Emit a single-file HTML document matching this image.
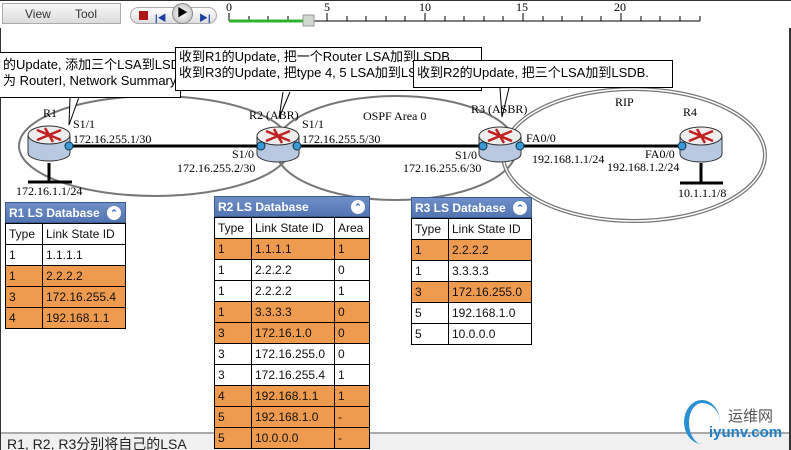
<!DOCTYPE html>
<html><head><meta charset="utf-8"><style>
*{margin:0;padding:0;box-sizing:border-box}
body{width:791px;height:450px;overflow:hidden;background:#fff;position:relative;font-family:"Liberation Sans","Noto Sans CJK SC",sans-serif}
.abs{position:absolute}
.call{position:absolute;background:#fff;border:1px solid #000;font-size:13px;line-height:16px;white-space:nowrap;overflow:hidden;padding:2px 3px;color:#000}
table{border-collapse:collapse;font-size:12px;position:absolute;background:#fff}
td{border:1px solid #000;height:21px;padding:0 3px;color:#111}
tr.o td{background:#ef9b4f}
.hd{position:absolute;background:linear-gradient(#6f8fc8,#5375b3);color:#fff;font-weight:bold;font-size:12px;line-height:20px;padding-left:3px;border:1px solid #3b5a90}
.hd i{position:absolute;right:4px;top:3px;width:14px;height:14px;border-radius:50%;background:#fff;color:#36c;font-style:normal;font-size:9px;line-height:14px;text-align:center}
.ser{font-family:"Liberation Serif",serif;font-size:12px;position:absolute;white-space:nowrap}
</style></head><body>
<div class="abs" style="left:0;top:28px;width:791px;height:422px;border-left:1px solid #333;border-right:2px solid #333"></div>
<div class="abs" style="left:0;top:0;width:791px;height:1px;background:#333"></div>
<div class="abs" style="left:2px;top:3px;width:119px;height:21px;border:1px solid #aaa;background:linear-gradient(#f8f8f8,#dcdcdc);font-size:12px;color:#333"><span class="abs" style="left:22px;top:3px">View</span><span class="abs" style="left:72px;top:3px">Tool</span></div>
<div class="abs" style="left:130px;top:7px;width:87px;height:17px;border:1px solid #aaa;border-radius:9px;background:linear-gradient(#fff,#ddd)"></div>
<div class="abs" style="left:139px;top:11px;width:9px;height:9px;background:#b01818"></div>
<div class="abs" style="left:155px;top:11px;color:#1a3fa0;font-size:9px;font-weight:bold">|◀</div>
<div class="abs" style="left:172px;top:3px;width:21px;height:21px;border-radius:50%;border:1px solid #888;background:radial-gradient(#fff,#bbb);font-size:11px;text-align:center;line-height:19px">▶</div>
<div class="abs" style="left:199px;top:11px;color:#1a3fa0;font-size:9px;font-weight:bold">▶|</div>
<svg class="abs" style="left:0;top:0" width="791" height="450">
<g font-family="Liberation Serif" font-size="12" fill="#000">
<text x="226" y="11">0</text><text x="324" y="11">5</text><text x="419" y="11">10</text><text x="516" y="11">15</text><text x="614" y="11">20</text>
</g>
<line x1="229" y1="21" x2="700" y2="21" stroke="#000"/>
<g stroke="#000">
<path d="M229 21V13M249 21V16M268 21V16M288 21V16M307 21V16M327 21V13M347 21V16M366 21V16M386 21V16M405 21V16M425 21V13M445 21V16M464 21V16M484 21V16M503 21V16M523 21V13M543 21V16M562 21V16M582 21V16M601 21V16M621 21V13M641 21V16M660 21V16M680 21V16M700 21V16"/>
</g>
<line x1="229" y1="21" x2="307" y2="21" stroke="#2db52d" stroke-width="3"/>
<rect x="303" y="15" width="11" height="11" fill="#d0d8d0" stroke="#999"/>
<ellipse cx="155" cy="146" rx="136" ry="50" fill="none" stroke="#777" stroke-width="2"/>
<ellipse cx="396" cy="148" rx="121" ry="52" fill="none" stroke="#777" stroke-width="2"/>
<ellipse cx="634" cy="155" rx="131" ry="66" fill="none" stroke="#777" stroke-width="4"/>
<ellipse cx="634" cy="155" rx="131" ry="66" fill="none" stroke="#fff" stroke-width="1.5"/>
<g stroke="#000" stroke-width="3"><line x1="68" y1="146" x2="262" y2="146"/><line x1="296" y1="146" x2="485" y2="146"/><line x1="518" y1="146" x2="683" y2="146"/>
<line x1="49" y1="163" x2="49" y2="182"/><line x1="28" y1="182" x2="72" y2="182"/>
<line x1="701" y1="163" x2="701" y2="182"/><line x1="680" y1="183" x2="723" y2="183"/></g>
<defs><g id="rt"><path d="M-21 0v18a21 8 0 0 0 42 0v-18" fill="#b8c8e0" stroke="#333"/><ellipse cx="0" cy="0" rx="21" ry="9" fill="#eee" stroke="#333"/><path d="M-12 -5L12 5M12 -5L-12 5M-4 -7L4 7" stroke="#c02020" stroke-width="2.5"/></g></defs>
<use href="#rt" x="49" y="135"/><use href="#rt" x="278" y="136"/><use href="#rt" x="500" y="136"/><use href="#rt" x="701" y="136"/>
<g fill="#3a9ad8" stroke="#134"><circle cx="69" cy="146" r="4"/><circle cx="261" cy="146" r="4"/><circle cx="297" cy="146" r="4"/><circle cx="483" cy="146" r="4"/><circle cx="520" cy="146" r="4"/><circle cx="682" cy="146" r="4"/></g>
<g stroke="#000" fill="#fff"><path d="M70 97L69 125L79 97"/><path d="M290 92L279 118L283 92"/><path d="M500 88L502 117L509 88"/></g>
</svg>
<div class="call" style="left:-1px;top:52px;width:182px;height:46px;padding-top:4px">的Update, 添加三个LSA到LSDB<br>为 RouterI, Network Summary</div>
<div class="call" style="left:175px;top:47px;width:307px;height:44px;padding-top:1px">收到R1的Update, 把一个Router LSA加到LSDB.<br>收到R3的Update, 把type 4, 5 LSA加到LSDB</div>
<div class="call" style="left:413px;top:60px;width:260px;height:28px;padding-top:4px">收到R2的Update, 把三个LSA加到LSDB.</div>
<div class="ser" style="left:43px;top:106px">R1</div>
<div class="ser" style="left:73px;top:117px">S1/1<br>172.16.255.1/30</div>
<div class="ser" style="left:232px;top:147px">S1/0</div>
<div class="ser" style="left:177px;top:161px">172.16.255.2/30</div>
<div class="ser" style="left:16px;top:184px">172.16.1.1/24</div>
<div class="ser" style="left:249px;top:108px">R2 (ABR)</div>
<div class="ser" style="left:302px;top:117px">S1/1<br>172.16.255.5/30</div>
<div class="ser" style="left:363px;top:109px">OSPF Area 0</div>
<div class="ser" style="left:471px;top:102px">R3 (ASBR)</div>
<div class="ser" style="left:455px;top:148px">S1/0</div>
<div class="ser" style="left:403px;top:161px">172.16.255.6/30</div>
<div class="ser" style="left:526px;top:131px">FA0/0</div>
<div class="ser" style="left:532px;top:152px">192.168.1.1/24</div>
<div class="ser" style="left:645px;top:147px">FA0/0</div>
<div class="ser" style="left:607px;top:160px">192.168.1.2/24</div>
<div class="ser" style="left:615px;top:95px">RIP</div>
<div class="ser" style="left:683px;top:105px">R4</div>
<div class="ser" style="left:678px;top:186px">10.1.1.1/8</div>
<div class="abs" style="left:1px;top:432px;width:788px;height:18px;border-top:2px solid #aaa;background:#f0f0f0;font-size:14px;color:#222;padding-left:6px;line-height:20px;white-space:nowrap;overflow:hidden">R1, R2, R3分别将自己的LSA</div>
<div class="abs" style="left:684px;top:400px;width:36px;height:44px;border-radius:50%;border-left:5px solid #2a8fd0;border-top:3px solid #2a8fd0"></div>
<div class="abs" style="left:728px;top:405px;font-size:15px;color:#555">运维网</div>
<div class="abs" style="left:709px;top:424px;font-size:15px;font-weight:bold;color:#1e7fc8">iyunv.com</div>
<div class="hd" style="left:5px;top:202px;width:121px;height:21px">R1 LS Database<i>⌃</i></div>
<table style="left:5px;top:223px;width:121px"><tr><td style="width:37px">Type</td><td>Link State ID</td></tr>
<tr><td>1</td><td>1.1.1.1</td></tr><tr class="o"><td>1</td><td>2.2.2.2</td></tr><tr class="o"><td>3</td><td>172.16.255.4</td></tr><tr class="o"><td>4</td><td>192.168.1.1</td></tr></table>
<div class="hd" style="left:214px;top:196px;width:156px;height:21px">R2 LS Database<i>⌃</i></div>
<table style="left:214px;top:217px;width:156px"><tr><td style="width:37px">Type</td><td style="width:83px">Link State ID</td><td>Area</td></tr>
<tr class="o"><td>1</td><td>1.1.1.1</td><td>1</td></tr>
<tr><td>1</td><td>2.2.2.2</td><td>0</td></tr>
<tr><td>1</td><td>2.2.2.2</td><td>1</td></tr>
<tr class="o"><td>1</td><td>3.3.3.3</td><td>0</td></tr>
<tr class="o"><td>3</td><td>172.16.1.0</td><td>0</td></tr>
<tr><td>3</td><td>172.16.255.0</td><td>0</td></tr>
<tr><td>3</td><td>172.16.255.4</td><td>1</td></tr>
<tr class="o"><td>4</td><td>192.168.1.1</td><td>1</td></tr>
<tr class="o"><td>5</td><td>192.168.1.0</td><td>-</td></tr>
<tr class="o"><td>5</td><td>10.0.0.0</td><td>-</td></tr></table>
<div class="hd" style="left:411px;top:197px;width:121px;height:21px">R3 LS Database<i>⌃</i></div>
<table style="left:411px;top:218px;width:121px"><tr><td style="width:37px">Type</td><td>Link State ID</td></tr>
<tr class="o"><td>1</td><td>2.2.2.2</td></tr><tr><td>1</td><td>3.3.3.3</td></tr><tr class="o"><td>3</td><td>172.16.255.0</td></tr><tr><td>5</td><td>192.168.1.0</td></tr><tr><td>5</td><td>10.0.0.0</td></tr></table>
</body></html>
